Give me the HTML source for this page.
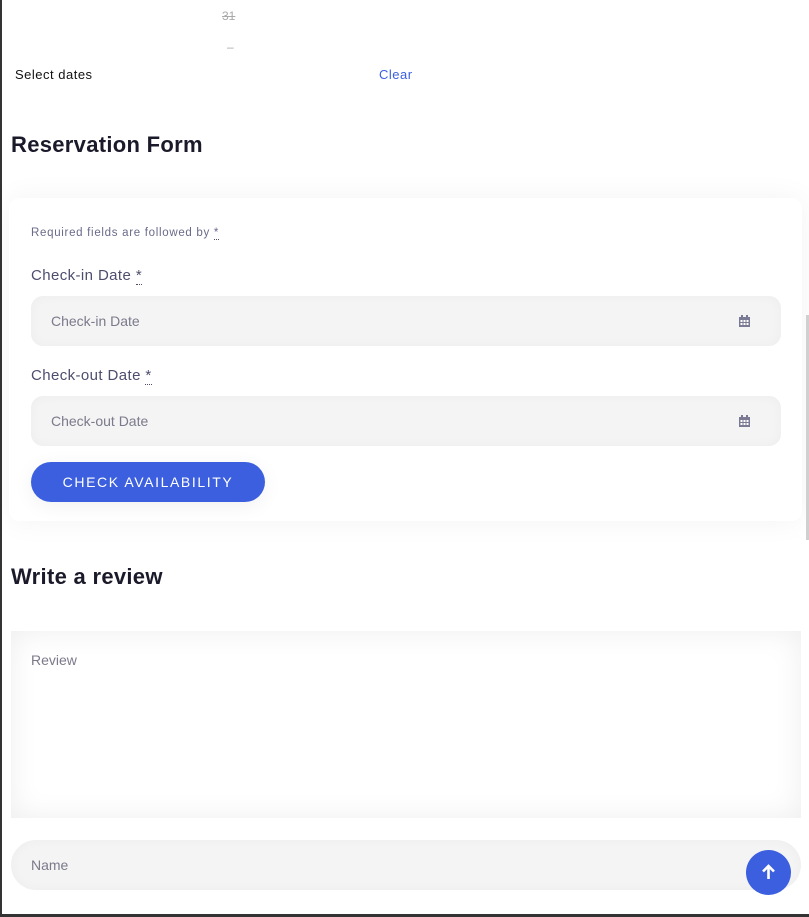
<!DOCTYPE html>
<html><head><style>
*{box-sizing:border-box;margin:0;padding:0}
body{width:809px;height:917px;overflow:hidden;background:#fff;font-family:"Liberation Sans",sans-serif;position:relative}
.a{position:absolute}
.inp{position:absolute;background:#f4f4f5;border-radius:12px;box-shadow:inset 0 0 12px rgba(0,0,0,0.03);color:#7a7a8a;font-size:14px;padding-left:20px;display:flex;align-items:center}
.lbl{position:absolute;left:31px;font-size:15px;color:#4d4d6e;letter-spacing:.4px}
.star{border-bottom:1px dotted #4d4d6e}
</style></head><body>
<div class="a" style="left:0;top:0;width:2px;height:917px;background:#333"></div>
<div class="a" style="left:222px;top:9px;font-size:12px;color:#aaa;text-decoration:line-through">31</div>
<div class="a" style="left:227px;top:40px;font-size:12px;color:#aaa">–</div>
<div class="a" style="left:15px;top:67px;font-size:13px;color:#111;letter-spacing:.5px">Select dates</div>
<div class="a" style="left:379px;top:67px;font-size:13px;color:#3b5fde;letter-spacing:.5px">Clear</div>
<div class="a" style="left:11px;top:132px;font-size:22px;font-weight:bold;color:#1a1a2a;letter-spacing:.3px">Reservation Form</div>
<div class="a" style="left:9px;top:198px;width:793px;height:323px;background:#fff;border-radius:10px;box-shadow:0 0 30px rgba(0,0,0,0.05)"></div>
<div class="a" style="left:31px;top:227px;font-size:11.5px;color:#6a6a8a;letter-spacing:.7px">Required fields are followed by <span class="star">*</span></div>
<div class="lbl" style="top:267px">Check-in Date <span class="star">*</span></div>
<div class="inp" style="left:31px;top:296px;width:750px;height:50px">Check-in Date</div>
<div class="lbl" style="top:367px">Check-out Date <span class="star">*</span></div>
<div class="inp" style="left:31px;top:396px;width:750px;height:50px">Check-out Date</div>
<svg class="a" style="left:739px;top:315px" width="11" height="12" viewBox="0 0 11 12"><rect x="0" y="2" width="11" height="10" fill="#7a7a95"/><rect x="2" y="0" width="2" height="3" fill="#7a7a95"/><rect x="7" y="0" width="2" height="3" fill="#7a7a95"/><g fill="#fff"><rect x="1.5" y="5" width="2" height="2"/><rect x="4.5" y="5" width="2" height="2"/><rect x="7.5" y="5" width="2" height="2"/><rect x="1.5" y="8" width="2" height="2"/><rect x="4.5" y="8" width="2" height="2"/><rect x="7.5" y="8" width="2" height="2"/></g></svg>
<svg class="a" style="left:739px;top:415px" width="11" height="12" viewBox="0 0 11 12"><rect x="0" y="2" width="11" height="10" fill="#7a7a95"/><rect x="2" y="0" width="2" height="3" fill="#7a7a95"/><rect x="7" y="0" width="2" height="3" fill="#7a7a95"/><g fill="#fff"><rect x="1.5" y="5" width="2" height="2"/><rect x="4.5" y="5" width="2" height="2"/><rect x="7.5" y="5" width="2" height="2"/><rect x="1.5" y="8" width="2" height="2"/><rect x="4.5" y="8" width="2" height="2"/><rect x="7.5" y="8" width="2" height="2"/></g></svg>
<div class="a" style="left:31px;top:462px;width:234px;height:40px;border-radius:20px;background:#3b5fde;color:#fff;font-size:14px;letter-spacing:1.6px;display:flex;align-items:center;justify-content:center;box-shadow:0 4px 20px rgba(0,0,0,0.06)">CHECK AVAILABILITY</div>
<div class="a" style="left:11px;top:564px;font-size:22px;font-weight:bold;color:#1a1a2a;letter-spacing:.3px">Write a review</div>
<div class="a" style="left:11px;top:631px;width:790px;height:187px;background:#fff;box-shadow:inset 0 0 30px rgba(0,0,0,0.07);font-size:14px;color:#7a7a8a;padding:21px 20px">Review</div>
<div class="inp" style="left:11px;top:840px;width:790px;height:50px;border-radius:25px">Name</div>
<div class="a" style="left:746px;top:850px;width:45px;height:45px;border-radius:50%;background:#3b5fde"></div>
<svg class="a" style="left:761px;top:864px" width="15" height="16" viewBox="0 0 15 16"><path d="M7.5 15V2M2 7.5L7.5 2L13 7.5" stroke="#fff" stroke-width="2.6" fill="none"/></svg>
<div class="a" style="left:806px;top:315px;width:3px;height:225px;background:#d0d0d0"></div>
<div class="a" style="left:0;top:914px;width:809px;height:3px;background:#333"></div>
</body></html>
